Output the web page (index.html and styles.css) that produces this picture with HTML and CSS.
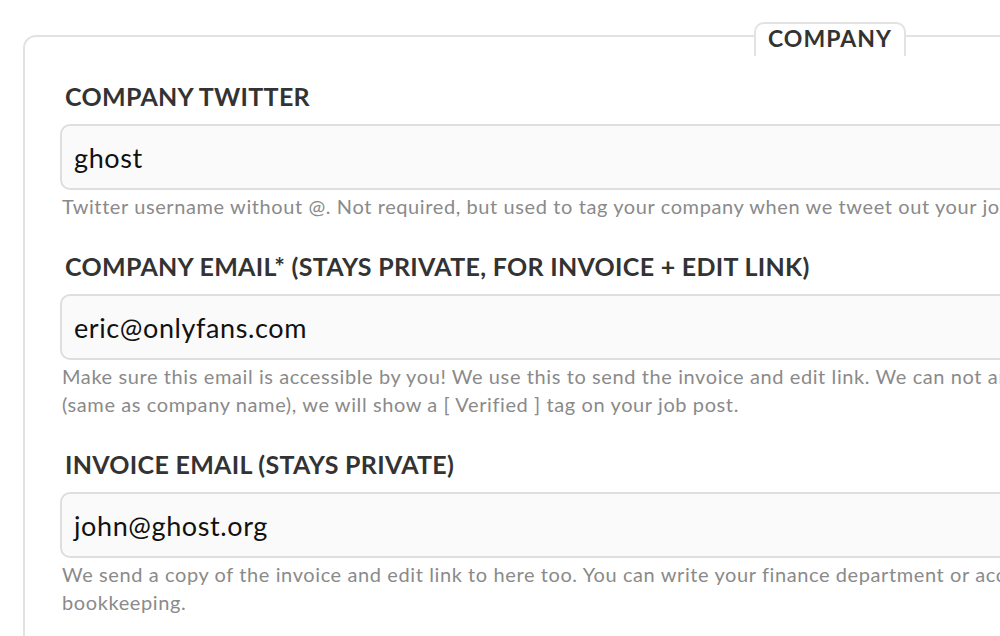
FILE: index.html
```html
<!DOCTYPE html>
<html lang="en">
<head>
<meta charset="utf-8">
<title>Company</title>
<link rel="stylesheet" href="styles.css">
</head>
<body>
<div class="page">
  <section class="card">
    <div class="tab">COMPANY</div>
    <div class="field">
      <label class="label">Company Twitter</label>
      <div class="input">ghost</div>
      <p class="help">Twitter username without @. Not required, but used to tag your company when we tweet out your job post</p>
    </div>
    <div class="field">
      <label class="label">Company email* (stays private, for invoice + edit link)</label>
      <div class="input">eric@onlyfans.com</div>
      <p class="help">Make sure this email is accessible by you! We use this to send the invoice and edit link. We can not and do not manually resend it!<br>(same as company name), we will show a [ Verified ] tag on your job post.</p>
    </div>
    <div class="field">
      <label class="label">Invoice email (stays private)</label>
      <div class="input">john@ghost.org</div>
      <p class="help">We send a copy of the invoice and edit link to here too. You can write your finance department or accountant expenses email here<br>bookkeeping.</p>
    </div>
  </section>
</div>
</body>
</html>
```

FILE: styles.css
```css
html, body {
  margin: 0;
  padding: 0;
  background: #ffffff;
}

body {
  font-family: "Lato", "Noto Sans", sans-serif;
  width: 1000px;
  height: 636px;
  overflow: hidden;
}

.page {
  padding: 35px 0 0 23px;
}

.card {
  position: relative;
  width: 1400px;
  height: 700px;
  box-sizing: border-box;
  border: 2px solid #e2e2e2;
  border-radius: 13px;
  padding: 44px 0 0 35px;
}

.tab {
  position: absolute;
  top: -15px;
  left: 729px;
  height: 34px;
  box-sizing: border-box;
  padding: 0 12px;
  background: #ffffff;
  border: 2px solid #e2e2e2;
  border-bottom: none;
  border-radius: 10px 10px 0 0;
  font-size: 23px;
  font-weight: 700;
  color: #333333;
  letter-spacing: 1px;
}

.field {
  display: flex;
  flex-direction: column;
  margin-bottom: 31px;
}

.label {
  display: block;
  padding-left: 5px;
  margin-bottom: 13px;
  font-size: 25px;
  font-weight: 700;
  text-transform: uppercase;
  color: #333333;
  letter-spacing: 0.3px;
}

.input {
  height: 66px;
  box-sizing: border-box;
  border: 2px solid #dedede;
  border-radius: 10px;
  background: #fafafa;
  padding: 0 12px;
  display: flex;
  align-items: center;
  font-size: 27px;
  letter-spacing: 0.6px;
  color: #111111;
}

.help {
  margin: 2px 0 0 2px;
  font-size: 20px;
  line-height: 28px;
  letter-spacing: 0.6px;
  color: #8a8a8a;
  white-space: nowrap;
}
```
